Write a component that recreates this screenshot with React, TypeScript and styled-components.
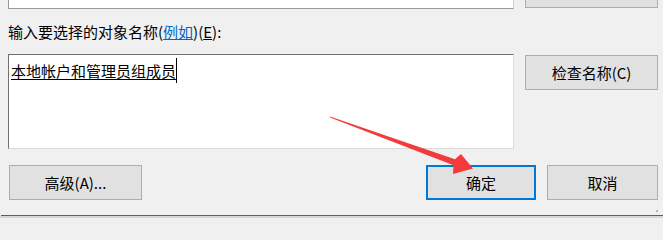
import React from 'react';
import styled, { createGlobalStyle } from 'styled-components';

const GlobalStyle = createGlobalStyle`
  html, body {
    margin: 0;
    padding: 0;
    background: #f0f0f0;
  }
  body {
    font-family: "Noto Sans CJK SC", "Noto Sans", "Liberation Sans", sans-serif;
    font-size: 15px;
    color: #000;
  }
`;

const Dialog = styled.div`
  position: relative;
  width: 663px;
  height: 218px;
  overflow: hidden;
  background: #f0f0f0;
  display: flex;
  flex-direction: column;
  & > * {
    flex-shrink: 0;
  }
`;

const Body = styled.div`
  padding: 0 5px 0 8px;
  height: 200px;
  display: flex;
  flex-direction: column;
  & > * {
    flex-shrink: 0;
  }
`;

const Row = styled.div<{ $top?: number; $height: number }>`
  display: grid;
  grid-template-columns: 506px 133px;
  column-gap: 11px;
  align-items: start;
  margin-top: ${p => p.$top ?? 0}px;
  height: ${p => p.$height}px;
  overflow: hidden;
`;

const ClippedBox = styled.div`
  height: 9px;
  box-sizing: border-box;
  background: #fff;
  border: 1px solid #9a9a9a;
  border-top: none;
  border-right-color: #cfcfcf;
`;

const ClippedButton = styled.div`
  height: 8px;
  box-sizing: border-box;
  background: #e1e1e1;
  border: 1px solid #adadad;
  border-top: none;
`;

const Label = styled.div`
  margin-top: 12px;
  height: 22px;
  line-height: 22px;
  white-space: nowrap;
  overflow: hidden;
`;

const Link = styled.span`
  color: #0066cc;
  text-decoration: underline;
`;

const Key = styled.span`
  text-decoration: underline;
`;

const NamesBox = styled.div`
  height: 95px;
  box-sizing: border-box;
  background: #fff;
  border-top: 1px solid #707070;
  border-left: 1px solid #707070;
  border-right: 1px solid #dcdcdc;
  border-bottom: 1px solid #dcdcdc;
  padding: 2px 0 0 2px;
  display: flex;
  align-items: flex-start;
`;

const NameLine = styled.div`
  display: flex;
  align-items: center;
  height: 27px;
`;

const ResolvedName = styled.span`
  text-decoration: underline;
  text-underline-offset: 2px;
  line-height: 22px;
  white-space: nowrap;
`;

const Caret = styled.span`
  width: 1px;
  height: 25px;
  background: #000;
`;

const Button = styled.button<{ $width?: number; $default?: boolean }>`
  box-sizing: border-box;
  width: ${p => (p.$width ? `${p.$width}px` : '100%')};
  height: 35px;
  margin: 0;
  padding: 0;
  background: #e1e1e1;
  border: ${p => (p.$default ? '2px solid #0078d7' : '1px solid #adadad')};
  font-family: inherit;
  font-size: 15px;
  color: #000;
  line-height: 20px;
  white-space: nowrap;
`;

const SideButton = styled(Button)`
  margin-top: 1px;
`;

const ButtonBar = styled.div`
  margin-top: 16px;
  height: 35px;
  padding-left: 1px;
  display: flex;
  align-items: center;
  gap: 11px;
`;

const Spacer = styled.div`
  flex: 1;
`;

const Footer = styled.div`
  height: 15px;
  display: flex;
  justify-content: flex-end;
  align-items: flex-end;
  padding: 0 5px 3px 0;
  box-sizing: border-box;
`;

const Grip = styled.span`
  width: 2px;
  height: 2px;
  background: #b4b4b4;
`;

const FocusLine = styled.div`
  height: 1px;
  margin-left: 1px;
  background: #0078d7;
`;

const FrameEdge = styled.div`
  height: 2px;
  background: #d6d6d6;
`;

const ArrowOverlay = styled.svg`
  position: absolute;
  left: 0;
  top: 0;
  pointer-events: none;
`;

export default function App() {
  return (
    <>
      <GlobalStyle />
      <Dialog>
        <Body>
          <Row $height={9}>
            <ClippedBox />
            <ClippedButton />
          </Row>

          <Label>
            输入要选择的对象名称(<Link>例如</Link>)(<Key>E</Key>):
          </Label>

          <Row $top={11} $height={95}>
            <NamesBox>
              <NameLine>
                <ResolvedName>本地帐户和管理员组成员</ResolvedName>
                <Caret />
              </NameLine>
            </NamesBox>
            <SideButton>检查名称(C)</SideButton>
          </Row>

          <ButtonBar>
            <Button $width={133}>高级(A)...</Button>
            <Spacer />
            <Button $width={110} $default>确定</Button>
            <Button $width={111}>取消</Button>
          </ButtonBar>
        </Body>

        <Footer>
          <Grip />
        </Footer>
        <FocusLine />
        <FrameEdge />

        <ArrowOverlay width="663" height="218" viewBox="0 0 663 218">
          <polygon
            points="330,116.6 455,159.2 461,154 473,168.5 453,174 453.5,165.2 330,117.6"
            fill="#f23c3c"
          />
        </ArrowOverlay>
      </Dialog>
    </>
  );
}
